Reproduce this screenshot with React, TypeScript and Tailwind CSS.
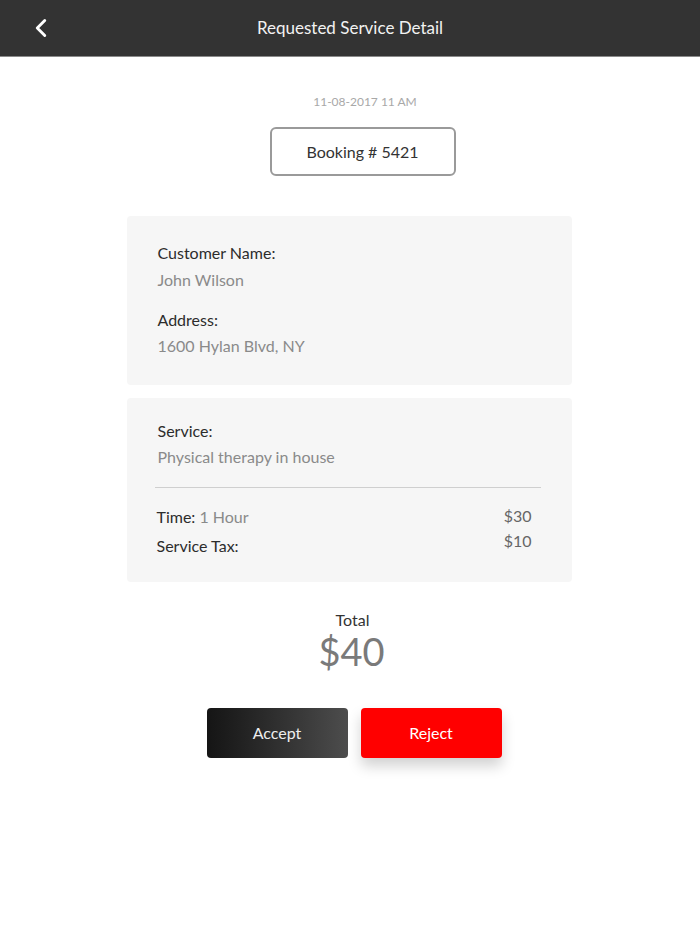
import { ChevronLeft } from 'lucide-react';

export default function App() {
  return (
    <div className="min-h-[934px] w-[700px] bg-white font-['Lato','Noto_Sans',sans-serif]">
      <header className="relative flex h-[57px] items-center justify-center border-b border-[#8a8a8a] bg-[#333333]">
        <button className="absolute left-[26px] top-[13px] text-white">
          <ChevronLeft size={30} strokeWidth={2.3} />
        </button>
        <h1 className="text-[17px] text-[#f2f2f2]">Requested Service Detail</h1>
      </header>

      <main className="flex flex-col items-center">
        <p className="mt-[36px] ml-[30px] text-[12px] leading-[18px] text-[#a8a8a8]">11-08-2017 11 AM</p>
        <div className="mt-[16px] ml-[25px] flex h-[49px] w-[186px] items-center justify-center rounded-[6px] border-2 border-[#9a9a9a] text-[16px] text-[#333]">
          Booking # 5421
        </div>

        <section className="mt-[40px] mr-[2px] w-[445px] rounded-[4px] bg-[#f6f6f6] px-[31px] pt-[26px] pb-[29px] text-[16px] leading-[21px]">
          <p className="text-[#2c2c2c]">Customer Name:</p>
          <p className="mt-[6px] text-[#8a8a8a]">John Wilson</p>
          <p className="mt-[19px] text-[#2c2c2c]">Address:</p>
          <p className="mt-[5px] text-[#8a8a8a]">1600 Hylan Blvd, NY</p>
        </section>

        <section className="mt-[13px] mr-[2px] w-[445px] rounded-[4px] bg-[#f6f6f6] pt-[22px] pb-[26px] text-[16px] leading-[21px]">
          <div className="px-[31px]">
            <p className="text-[#2c2c2c]">Service:</p>
            <p className="mt-[5px] text-[#8a8a8a]">Physical therapy in house</p>
          </div>
          <div className="mt-[20px] ml-[28px] mr-[31px] h-px bg-[#cfcfcf]" />
          <div className="mt-[18px] flex justify-between pl-[30px] pr-[40px]">
            <div className="flex flex-col gap-[8px] text-[#2c2c2c]">
              <p>
                Time: <span className="text-[#8a8a8a]">1 Hour</span>
              </p>
              <p>Service Tax:</p>
            </div>
            <div className="-mt-[1px] flex flex-col gap-[4px] text-[#666]">
              <p>$30</p>
              <p>$10</p>
            </div>
          </div>
        </section>

        <p className="mt-[27px] ml-[5px] text-[16px] leading-[21px] text-[#333]">Total</p>
        <p className="-mt-[1px] ml-[3px] text-[38px] leading-[44px] text-[#7a7a7a]">$40</p>

        <div className="mt-[35px] ml-[8px] flex gap-[13px]">
          <button className="h-[50px] w-[141px] rounded-[4px] bg-gradient-to-r from-[#151515] to-[#4d4d4d] text-[16px] text-[#eeeeee]">
            Accept
          </button>
          <button className="h-[50px] w-[141px] rounded-[4px] bg-[#ff0000] text-[16px] text-white shadow-[0_8px_14px_rgba(0,0,0,0.18)]">
            Reject
          </button>
        </div>
      </main>
    </div>
  );
}
